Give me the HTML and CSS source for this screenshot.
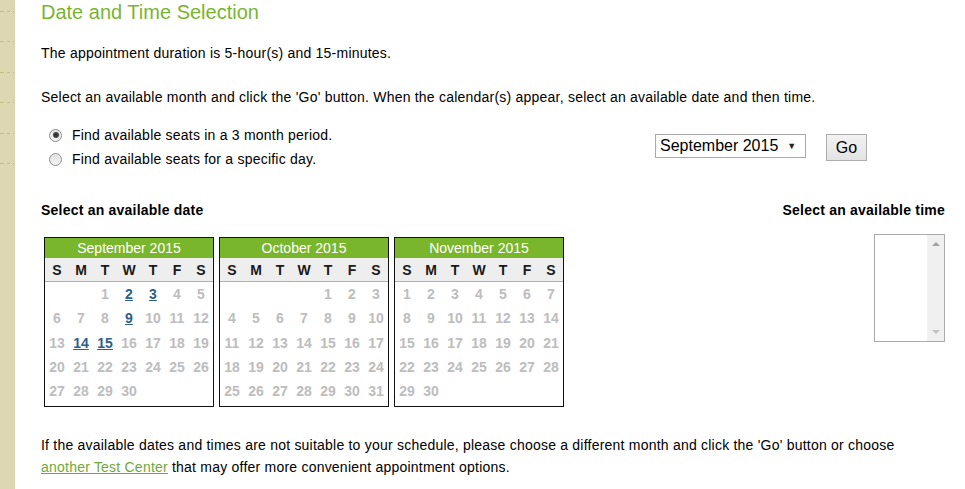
FILE: index.html
```html
<!DOCTYPE html>
<html>
<head>
<meta charset="utf-8">
<link rel="stylesheet" href="styles.css">
</head>
<body>
<div class="page">
  <div class="strip">
    <div class="dash"></div><div class="dash"></div><div class="dash"></div>
    <div class="dash"></div><div class="dash"></div><div class="dash"></div>
  </div>
  <div class="main">
    <h1 class="title">Date and Time Selection</h1>
    <p class="p1">The appointment duration is 5-hour(s) and 15-minutes.</p>
    <p class="p2">Select an available month and click the 'Go' button. When the calendar(s) appear, select an available date and then time.</p>
    <div class="options">
      <div class="radios">
        <label class="opt"><span class="radio checked"></span>Find available seats in a 3 month period.</label>
        <label class="opt"><span class="radio"></span>Find available seats for a specific day.</label>
      </div>
      <div class="picker">
        <div class="select"><span>September 2015</span><span class="caret">▼</span></div>
        <div class="gobtn">Go</div>
      </div>
    </div>
    <div class="headings">
      <div class="h">Select an available date</div>
      <div class="h">Select an available time</div>
    </div>
    <div class="calrow">
      <div class="cals">
        <div class="cal">
          <div class="cal-h">September 2015</div>
          <div class="dow"><span>S</span><span>M</span><span>T</span><span>W</span><span>T</span><span>F</span><span>S</span></div>
          <div class="days">
            <span></span><span></span><span>1</span><span class="av">2</span><span class="av">3</span><span>4</span><span>5</span>
            <span>6</span><span>7</span><span>8</span><span class="av">9</span><span>10</span><span>11</span><span>12</span>
            <span>13</span><span class="av">14</span><span class="av">15</span><span>16</span><span>17</span><span>18</span><span>19</span>
            <span>20</span><span>21</span><span>22</span><span>23</span><span>24</span><span>25</span><span>26</span>
            <span>27</span><span>28</span><span>29</span><span>30</span>
          </div>
        </div>
        <div class="cal">
          <div class="cal-h">October 2015</div>
          <div class="dow"><span>S</span><span>M</span><span>T</span><span>W</span><span>T</span><span>F</span><span>S</span></div>
          <div class="days">
            <span></span><span></span><span></span><span></span><span>1</span><span>2</span><span>3</span>
            <span>4</span><span>5</span><span>6</span><span>7</span><span>8</span><span>9</span><span>10</span>
            <span>11</span><span>12</span><span>13</span><span>14</span><span>15</span><span>16</span><span>17</span>
            <span>18</span><span>19</span><span>20</span><span>21</span><span>22</span><span>23</span><span>24</span>
            <span>25</span><span>26</span><span>27</span><span>28</span><span>29</span><span>30</span><span>31</span>
          </div>
        </div>
        <div class="cal">
          <div class="cal-h">November 2015</div>
          <div class="dow"><span>S</span><span>M</span><span>T</span><span>W</span><span>T</span><span>F</span><span>S</span></div>
          <div class="days">
            <span>1</span><span>2</span><span>3</span><span>4</span><span>5</span><span>6</span><span>7</span>
            <span>8</span><span>9</span><span>10</span><span>11</span><span>12</span><span>13</span><span>14</span>
            <span>15</span><span>16</span><span>17</span><span>18</span><span>19</span><span>20</span><span>21</span>
            <span>22</span><span>23</span><span>24</span><span>25</span><span>26</span><span>27</span><span>28</span>
            <span>29</span><span>30</span>
          </div>
        </div>
      </div>
      <div class="listbox">
        <div class="lb-body"></div>
        <div class="lb-scroll"><span class="up"></span><span class="down"></span></div>
      </div>
    </div>
    <p class="bottom">If the available dates and times are not suitable to your schedule, please choose a different month and click the 'Go' button or choose <a href="#">another Test Center</a> that may offer more convenient appointment options.</p>
  </div>
</div>
</body>
</html>
```

FILE: styles.css
```css
html, body {
  margin: 0;
  padding: 0;
  background: #fff;
}
body {
  font-family: "Liberation Sans", Arial, sans-serif;
  font-size: 14px;
  color: #000;
}
.page {
  display: flex;
  min-height: 489px;
}
.strip {
  width: 14px;
  border-right: 1px solid #d9d3aa;
  background: #ddd8b2;
  display: flex;
  flex-direction: column;
  gap: 29.4px;
  padding-top: 11px;
  box-sizing: content-box;
  flex: none;
}
.dash {
  height: 1px;
  background: repeating-linear-gradient(90deg, #c4bc86 0 3px, transparent 3px 6px);
  background-position: 1px 0;
}
.main {
  width: 904px;
  padding-left: 26px;
  display: flex;
  flex-direction: column;
  letter-spacing: 0.22px;
}
.title {
  margin: 0;
  font-size: 20px;
  line-height: 24px;
  font-weight: normal;
  color: #7ab42f;
  letter-spacing: 0;
}
.p1 {
  margin: 20px 0 0;
  line-height: 18px;
}
.p2 {
  margin: 26px 0 0;
  line-height: 18px;
}
.options {
  margin-top: 17px;
  display: flex;
  justify-content: space-between;
}
.radios {
  display: flex;
  flex-direction: column;
}
.opt {
  height: 24px;
  display: flex;
  align-items: center;
  padding-left: 8px;
}
.radio {
  width: 11px;
  height: 11px;
  border-radius: 50%;
  border: 1px solid #8c8c8c;
  background: linear-gradient(#dcdcdc, #f7f7f7);
  margin-right: 10px;
  position: relative;
  box-shadow: inset 0 0 0 1px #efefef;
  flex: none;
}
.radio.checked::after {
  content: "";
  position: absolute;
  left: 2.5px;
  top: 2.5px;
  width: 6px;
  height: 6px;
  border-radius: 50%;
  background: radial-gradient(#2a2a2a, #5a5a5a);
}
.picker {
  display: flex;
  align-items: flex-start;
  gap: 20px;
  margin-top: 11px;
  margin-right: 78px;
  letter-spacing: 0;
}
.select {
  height: 22px;
  border: 1px solid #a9a9a9;
  font-size: 16px;
  display: flex;
  align-items: center;
  padding-left: 4px;
  box-sizing: content-box;
  width: 145px;
  gap: 9px;
}
.caret {
  font-size: 9px;
  color: #222;
}
.gobtn {
  width: 39px;
  height: 25px;
  border: 1px solid #adadad;
  background: linear-gradient(#f2f2f2, #e3e3e3);
  font-size: 16px;
  display: flex;
  align-items: center;
  justify-content: center;
}
.headings {
  margin-top: 30px;
  display: flex;
  justify-content: space-between;
  font-weight: bold;
  line-height: 18px;
}
.calrow {
  margin-top: 15px;
  display: flex;
  justify-content: space-between;
  align-items: flex-start;
  letter-spacing: 0;
}
.cals {
  display: flex;
  gap: 5px;
  padding-left: 3px;
  margin-top: 3px;
}
.cal {
  width: 168px;
  border: 1px solid #111;
  padding-bottom: 3px;
}
.cal-h {
  height: 20px;
  line-height: 20px;
  background: #7ab62b;
  color: #fff;
  text-align: center;
}
.dow {
  display: grid;
  grid-template-columns: repeat(7, 24px);
  height: 23px;
  background: #eeeeee;
  border-bottom: 1px solid #b0b0b0;
  font-weight: bold;
  color: #1a1a1a;
  align-items: center;
  text-align: center;
}
.days {
  display: grid;
  grid-template-columns: repeat(7, 24px);
  grid-auto-rows: 24.3px;
  align-items: center;
  text-align: center;
  font-weight: bold;
  color: #bdbdbd;
}
.days .av {
  color: #2b5f8e;
  text-decoration: underline;
}
.listbox {
  width: 69px;
  height: 106px;
  border: 1px solid #ababab;
  display: flex;
}
.lb-body {
  flex: 1;
}
.lb-scroll {
  width: 17px;
  background: #f0f0f0;
  display: flex;
  flex-direction: column;
  justify-content: space-between;
  align-items: center;
  padding: 7px 0 7px;
}
.up {
  width: 0;
  height: 0;
  border-left: 4px solid transparent;
  border-right: 4px solid transparent;
  border-bottom: 4px solid #a3a3a3;
}
.down {
  width: 0;
  height: 0;
  border-left: 4px solid transparent;
  border-right: 4px solid transparent;
  border-top: 4px solid #c2c2c2;
}
.bottom {
  margin: 27px 0 0;
  line-height: 22px;
  max-width: 880px;
}
.bottom a {
  color: #6fa83a;
  text-decoration: underline;
}
```
